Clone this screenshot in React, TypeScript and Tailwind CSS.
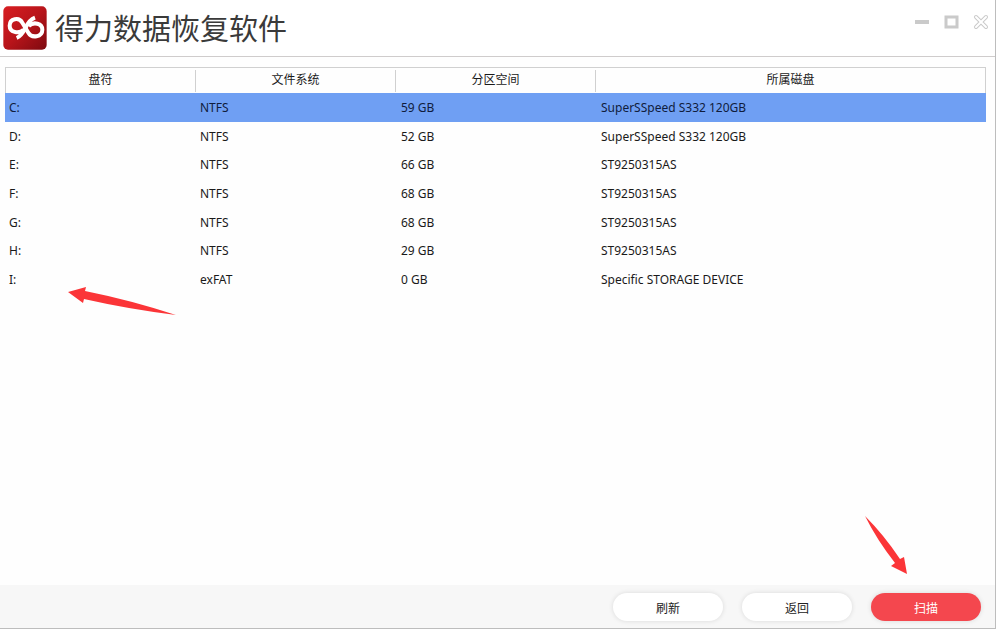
import React from 'react'

const columns = ['盘符', '文件系统', '分区空间', '所属磁盘']

const drives = [
    { letter: 'C:', fs: 'NTFS', size: '59 GB', disk: 'SuperSSpeed S332 120GB' },
    { letter: 'D:', fs: 'NTFS', size: '52 GB', disk: 'SuperSSpeed S332 120GB' },
    { letter: 'E:', fs: 'NTFS', size: '66 GB', disk: 'ST9250315AS' },
    { letter: 'F:', fs: 'NTFS', size: '68 GB', disk: 'ST9250315AS' },
    { letter: 'G:', fs: 'NTFS', size: '68 GB', disk: 'ST9250315AS' },
    { letter: 'H:', fs: 'NTFS', size: '29 GB', disk: 'ST9250315AS' },
    { letter: 'I:', fs: 'exFAT', size: '0 GB', disk: 'Specific STORAGE DEVICE' },
]

const Logo = () => (
    <svg className="size-11" viewBox="0 0 132 132" aria-hidden="true">
        <defs>
            <linearGradient id="logo-bg" x1="0" y1="0" x2="1" y2="1">
                <stop offset="0" stopColor="#d81e22" />
                <stop offset="0.5" stopColor="#b8141a" />
                <stop offset="1" stopColor="#7d0a10" />
            </linearGradient>
        </defs>
        <rect x="1" y="1" width="130" height="130" rx="14" fill="url(#logo-bg)" />
        <g fill="none" stroke="#fff" strokeWidth="12">
            <path d="M41 96 C56 90 62 76 68 65 C75 50 82 40 96 35" />
            <path d="M62 71 C46 86 20 78 20 59 C20 38 48 32 58 50 L76 80 C86 98 118 93 118 71 C118 52 92 46 77 60" />
        </g>
    </svg>
)

const TitleBar = () => (
    <header className="flex h-[57px] items-start justify-between border-b border-[#cfcccc] pl-[3px] pr-[6px]">
        <div className="flex h-14 items-center gap-2">
            <Logo />
            <h1 className="pt-0.5 text-[29px] leading-10 font-normal text-[#3a3a3a]">得力数据恢复软件</h1>
        </div>
        <div className="flex gap-[14px] pt-[14px] text-[#cacaca]">
            <button type="button" aria-label="最小化" className="size-4">
                <svg viewBox="0 0 16 16" className="size-4">
                    <path d="M2 6h14v4H2z" fill="currentColor" />
                </svg>
            </button>
            <button type="button" aria-label="最大化" className="size-4">
                <svg viewBox="0 0 16 16" className="size-4">
                    <path d="M3 3h11v10H3z" fill="none" stroke="currentColor" strokeWidth="3" />
                </svg>
            </button>
            <button type="button" aria-label="关闭" className="size-4">
                <svg viewBox="0 0 16 16" className="size-4">
                    <path d="M3 3l10 10M13 3L3 13" stroke="currentColor" strokeWidth="4" strokeLinecap="round" />
                    <path d="M3 3l10 10M13 3L3 13" stroke="#fff" strokeWidth="2" strokeLinecap="round" />
                </svg>
            </button>
        </div>
    </header>
)

const DriveTable = () => (
    <table className="w-full table-fixed border-separate border-spacing-0 text-xs text-[#1a1a1a]">
        <colgroup>
            <col className="w-[191px]" />
            <col className="w-[200px]" />
            <col className="w-[200px]" />
            <col />
        </colgroup>
        <thead>
            <tr>
                {columns.map((name) => (
                    <th key={name} scope="col" className="group h-[26px] border-t border-[#d0d0d0] p-0 font-normal first:border-l last:border-r">
                        <div className="h-[22px] border-r border-[#d0d0d0] leading-5 group-last:border-r-0">{name}</div>
                    </th>
                ))}
            </tr>
        </thead>
        <tbody>
            {drives.map((drive, i) => (
                <tr key={drive.letter} className={i === 0 ? 'h-[29px] bg-[#6f9ff3] text-[#101c3c]' : 'h-[29px] nth-[3n]:h-7'}>
                    <td className="py-0 pr-0 pl-1">{drive.letter}</td>
                    <td className="py-0 pr-0 pl-1">{drive.fs}</td>
                    <td className="py-0 pr-0 pl-[5px]">{drive.size}</td>
                    <td className="py-0 pr-0 pl-[5px]">{drive.disk}</td>
                </tr>
            ))}
        </tbody>
    </table>
)

const App = () => {
    return (
        <div className="flex min-h-screen flex-col bg-white pr-2 pb-[7px] font-['Noto_Sans','Noto_Sans_CJK_SC',sans-serif]">
            <div className="relative flex grow flex-col border-r border-b border-[#bdbdbd]">
                <TitleBar />
                <main className="grow bg-[#fefefe] pt-[10px] pr-[9px] pb-6 pl-[5px]">
                    <DriveTable />
                </main>
                <footer className="flex h-[43px] items-center justify-end gap-[19px] bg-[#f7f7f7] pt-px pr-[14px] text-xs">
                    <button type="button" className="h-7 w-[110px] rounded-full bg-white pt-1 text-[#222] shadow-[0_0_5px_rgba(0,0,0,0.12)]">
                        刷新
                    </button>
                    <button type="button" className="h-7 w-[110px] rounded-full bg-white pt-1 text-[#222] shadow-[0_0_5px_rgba(0,0,0,0.12)]">
                        返回
                    </button>
                    <button type="button" className="h-7 w-[110px] rounded-full bg-[#f4474e] pt-1 text-white shadow-[0_0_5px_rgba(0,0,0,0.12)]">
                        扫描
                    </button>
                </footer>

                {/* pointer arrows drawn over the window */}
                <svg className="pointer-events-none absolute top-[286px] left-[68px] h-[30px] w-[108px]" viewBox="0 0 108 30" aria-hidden="true">
                    <path d="M0 6 L18 1 L17 5 Q62 14 108 29 Q60 23 16 13 L15 17 Z" fill="#fb3538" />
                </svg>
                <svg className="pointer-events-none absolute right-[87px] bottom-[53px] h-[60px] w-[44px]" viewBox="0 0 44 60" aria-hidden="true">
                    <path d="M1 1 Q20 20 36 44 L40 42 L43 59 L27 51 L31 48 Q13 25 1 1 Z" fill="#fb3538" />
                </svg>
            </div>
        </div>
    )
}

export default App
